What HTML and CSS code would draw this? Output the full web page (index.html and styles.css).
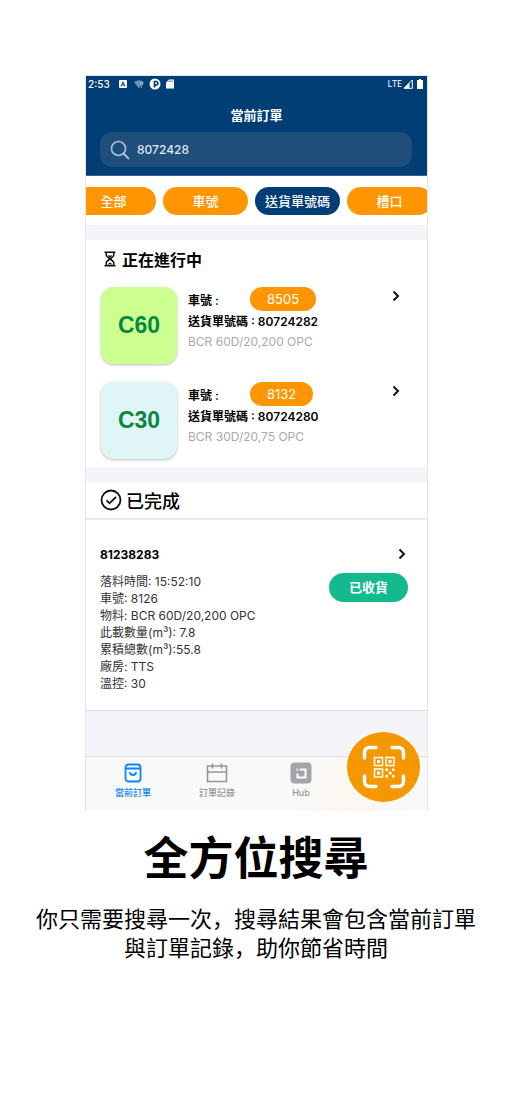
FILE: index.html
```html
<!DOCTYPE html>
<html lang="zh-Hant">
<head>
<meta charset="utf-8">
<meta name="viewport" content="width=device-width, initial-scale=1">
<title>當前訂單</title>
<link rel="stylesheet" href="styles.css">
</head>
<body>
<main class="promo">
  <div class="phone">
    <header class="header">
      <div class="status">
        <span class="clock">2:53</span>
        <svg class="status-icon" viewBox="0 0 10 10" aria-hidden="true"><rect x="1" y="1" width="8" height="8" rx="1" fill="#fff"/><path d="M3 7.5 5 2.8 7 7.5M3.8 6h2.4" fill="none" stroke="#003e75"/></svg>
        <svg class="status-icon wifi" viewBox="0 0 12 10" aria-hidden="true"><path d="M0 2.5Q6-1.500 12 2.500L6 10Z" fill="#6f93b5"/><path d="M7.500 5q.2-1.300 1.500-1.300 1.500 0 1.500 1.200T9 7v.8M9 8.800v1" fill="none" stroke="#c4d3e0"/></svg>
        <svg class="status-icon parking" viewBox="0 0 12 12" aria-hidden="true"><circle cx="6" cy="6" r="5.500" fill="#fff"/><path d="M5.500 9.500V3.500h1.600a1.700 1.700 0 0 1 0 3.600H5.500" fill="none" stroke="#003e75" stroke-width="1.600"/></svg>
        <svg class="status-icon" viewBox="0 0 10 10" aria-hidden="true"><path d="M4 .5h5v9H1v-6Z" fill="#fff"/><path d="M4.200 1.500v1.600M5.800 1.500v1.600M7.400 1.500v1.600" stroke="#003e75" stroke-width=".7"/></svg>
        <span class="network">LTE</span>
        <svg class="status-icon signal" viewBox="0 0 10 10" aria-hidden="true"><path d="M9.300 1v8.300H1Z" fill="none" stroke="#fff"/><path d="M6.500 3.800v5.500H1Z" fill="#fff"/></svg>
        <svg class="battery" viewBox="0 0 6 10" aria-hidden="true"><path d="M2 0h2v1h2v9H0V1h2Z" fill="#fff"/></svg>
      </div>
      <h1 class="title">當前訂單</h1>
      <label class="search">
        <svg class="search-icon" viewBox="0 0 20 20" aria-label="搜尋" role="img"><circle cx="8.500" cy="8.500" r="7" fill="none" stroke="currentColor" stroke-width="1.700"/><path d="m13.500 13.500 5.500 5.500" stroke="currentColor" stroke-width="2"/></svg>
        <input class="search-input" type="text" value="8072428">
      </label>
    </header>

    <nav class="chips">
      <button class="chip" type="button">全部</button>
      <button class="chip" type="button">車號</button>
      <button class="chip chip-active" type="button">送貨單號碼</button>
      <button class="chip" type="button">槽口</button>
    </nav>

    <section class="panel ongoing">
      <h2 class="ongoing-title">
        <svg class="hourglass" viewBox="0 0 12 16" aria-hidden="true"><path d="M.5 1.200h11M.5 14.800h11M2.200 1.500V4q0 1.500 3.800 4 3.800-2.500 3.800-4V1.500M2.200 14.500V12Q2.200 10.500 6 8q3.800 2.500 3.800 4v2.500" fill="none" stroke="#111" stroke-width="1.500"/><path d="M3.500 4.500h5L6 7ZM3.200 13.500 6 11.500l2.800 2Z" fill="#111"/></svg>
        正在進行中
      </h2>
      <article class="order">
        <div class="grade grade-lime">C60</div>
        <div class="order-info">
          <div class="plate"><span>車號 :</span><span class="badge">8505</span></div>
          <div class="number">送貨單號碼 : 80724282</div>
          <div class="material">BCR 60D/20,200 OPC</div>
        </div>
        <svg class="chevron" viewBox="0 0 8 12" aria-hidden="true"><path d="m1.500 1.500 4.500 4.500-4.500 4.500" fill="none" stroke="currentColor" stroke-width="2"/></svg>
      </article>
      <article class="order">
        <div class="grade grade-mint">C30</div>
        <div class="order-info">
          <div class="plate"><span>車號 :</span><span class="badge">8132</span></div>
          <div class="number">送貨單號碼 : 80724280</div>
          <div class="material">BCR 30D/20,75 OPC</div>
        </div>
        <svg class="chevron" viewBox="0 0 8 12" aria-hidden="true"><path d="m1.500 1.500 4.500 4.500-4.500 4.500" fill="none" stroke="currentColor" stroke-width="2"/></svg>
      </article>
    </section>

    <section class="panel">
      <h2 class="done-title">
        <svg class="check" viewBox="0 0 22 22" aria-hidden="true"><circle cx="11" cy="11" r="9.500" fill="none" stroke="#111" stroke-width="1.800"/><path d="m6.500 11.300 3 3L16 8" fill="none" stroke="#111" stroke-width="1.800"/></svg>
        已完成
      </h2>
      <article class="done">
        <div class="done-head">
          <h3 class="done-number">81238283</h3>
          <svg class="chevron" viewBox="0 0 8 12" aria-hidden="true"><path d="m1.500 1.500 4.500 4.500-4.500 4.500" fill="none" stroke="currentColor" stroke-width="2"/></svg>
        </div>
        <div class="done-body">
          <ul class="details">
            <li>落料時間: 15:52:10</li>
            <li>車號: 8126</li>
            <li>物料: BCR 60D/20,200 OPC</li>
            <li>此載數量(m³): 7.8</li>
            <li>累積總數(m³):55.8</li>
            <li>廠房: TTS</li>
            <li>溫控: 30</li>
          </ul>
          <span class="received">已收貨</span>
        </div>
      </article>
    </section>

    <nav class="tabs">
      <a class="tab tab-active" href="#">
        <svg class="tab-icon" viewBox="0 0 22 22" fill="none" stroke="currentColor" stroke-width="1.800" aria-hidden="true"><rect x="3.500" y="2.500" width="15" height="17" rx="3"/><path d="M4 6.500h14M8 10q0 3 3 3t3-3"/></svg>
        當前訂單
      </a>
      <a class="tab" href="#">
        <svg class="tab-icon" viewBox="0 0 22 22" fill="none" stroke="currentColor" stroke-width="1.600" aria-hidden="true"><path d="M1.500 4h19v15.500h-19ZM1.500 10h19M6.500 1.500v5M15.500 1.500v5"/></svg>
        訂單記錄
      </a>
      <a class="tab" href="#">
        <svg class="tab-icon" viewBox="0 0 22 22" aria-hidden="true"><rect x=".5" y=".5" width="21" height="21" rx="4" fill="#a4a4a8"/><path d="M10 7.500h5.500v8H7.500v-4" fill="none" stroke="#fff" stroke-width="2"/><rect x="6" y="6.500" width="2.500" height="2.500" fill="#d6d6d8"/></svg>
        Hub
      </a>
      <span class="tab-space"></span>
      <button class="scan" type="button" aria-label="QR">
        <svg class="scan-icon" viewBox="0 0 44 44" fill="none" stroke="#fff" aria-hidden="true">
          <path d="M2.500 13V8q0-5.500 5.500-5.500h6M30 2.500h6q5.500 0 5.500 5.500v5M41.500 31v5q0 5.500-5.500 5.500h-6M14 41.500H8Q2.500 41.500 2.500 36v-5" stroke-width="3.500" stroke-linecap="round"/>
          <path d="M12.500 12.500h8v8h-8ZM24 12.500h8v8h-8ZM12.500 24h8v8h-8Z" stroke-width="1.500"/>
          <path d="M15 15h3v3h-3ZM26.500 15h3v3h-3ZM15 26.500h3v3h-3ZM23.500 23.500h2.500v2.500h-2.500ZM30 23.500h2.500v2.500H30ZM26.700 26.700h2.800v2.800h-2.800ZM23.500 30h2.500v2.500h-2.500ZM30 30h2.500v2.500H30Z" fill="#fff" stroke="none"/>
        </svg>
      </button>
    </nav>
  </div>

  <h2 class="headline" lang="zh-Hans">全方位搜尋</h2>
  <p class="copy" lang="zh-Hans">你只需要搜尋一次，搜尋結果會包含當前訂單<br>與訂單記錄，助你節省時間</p>
</main>
</body>
</html>
```
FILE: styles.css
```css
* { box-sizing: border-box; }

body {
  margin: 0;
  background: #fff;
  color: #000;
  font-family: Inter, "Noto Sans CJK TC", sans-serif;
}

h1, h2, h3, p, ul { margin: 0; padding: 0; }
ul { list-style: none; }
svg { display: block; flex: none; }
button { border: 0; font: inherit; cursor: pointer; }

.promo { padding: 75px 0; }

.phone {
  display: flex;
  flex-direction: column;
  margin: 0 84px 0 85px;
  border: 1px solid #e4e4ec;
  border-bottom: 0;
  background: #f5f5f9;
}

.header {
  height: 100px;
  padding: 0 14px;
  background: #003e75;
  border-bottom: 1px solid #3c6391;
  color: #fff;
}

.status {
  display: flex;
  align-items: center;
  height: 15px;
  margin: 0 -12px;
  padding-right: 2px;
}
.clock { margin-right: 8px; font-size: 10px; font-weight: 500; }
.status-icon { width: 10px; height: 10px; margin-right: 6px; }
.wifi { margin-right: 5px; }
.parking { width: 12px; height: 12px; margin-right: 4px; }
.network { margin-left: auto; margin-right: 1px; font: 9px "Noto Sans", sans-serif; }
.signal { margin-right: 4px; }
.battery { width: 6px; height: 10px; }

.title {
  padding-top: 15px;
  font-size: 13px;
  line-height: 18px;
  font-weight: 700;
  text-align: center;
}

.search {
  display: flex;
  align-items: center;
  gap: 7px;
  height: 35px;
  margin: 8px 1px 0 0;
  padding: 0 10px;
  border-radius: 12px;
  background: #1f4e7b;
}
.search-icon { width: 20px; height: 20px; color: #a9bfd3; }
.search-input {
  flex: 1;
  min-width: 0;
  padding: 0;
  border: 0;
  outline: 0;
  background: none;
  color: #dfe7ef;
  font: 500 12px Inter, sans-serif;
}

.chips {
  display: flex;
  gap: 7px;
  padding: 11px 0 10px;
  overflow: hidden;
  background: #fff;
}
.chip {
  flex: none;
  width: 85px;
  height: 28px;
  padding: 0;
  border-radius: 14px;
  background: #ff9500;
  color: #fff;
  font-size: 13px;
  line-height: 26px;
  font-weight: 500;
}
.chip:first-child { margin-left: -15px; }
.chip-active { background: #003e75; }

.panel { margin-top: 15px; background: #fff; }

.ongoing { padding: 0 14px 8px; }
.ongoing-title {
  display: flex;
  align-items: center;
  gap: 6px;
  height: 37px;
  padding-left: 4px;
  font-size: 16px;
  font-weight: 700;
}
.hourglass { width: 12px; height: 16px; }

.order { display: flex; margin: 10px 0 18px; }
.order + .order { margin-bottom: 0; }
.grade {
  display: grid;
  place-items: center;
  width: 76px;
  height: 77px;
  margin: 0 11px 0 1px;
  border-radius: 13px;
  box-shadow: 0 1px 3px #0004;
  color: #078842;
  font-family: "Liberation Sans", Arial, sans-serif;
  font-size: 23px;
  font-weight: 700;
}
.grade-lime { background: #ccff90; }
.grade-mint { background: #e0f5f5; }
.order-info { flex: 1; font-size: 12px; font-weight: 600; white-space: nowrap; }
.plate { display: flex; align-items: center; height: 24px; }
.plate span:first-child { width: 62px; }
.badge {
  padding: 0 17px;
  border-radius: 12px;
  background: #ff9500;
  color: #fff;
  font-size: 13px;
  line-height: 24px;
  font-weight: 400;
}
.number { line-height: 22px; }
.material { color: #a9a9b4; font-weight: 400; line-height: 17px; }
.chevron { width: 8px; height: 12px; margin: 3px 13px 0 0; color: #111; }

.done-title {
  display: flex;
  align-items: center;
  gap: 4px;
  height: 38px;
  padding-left: 14px;
  border-bottom: 2px solid #e6e6ec;
  font-size: 18px;
  font-weight: 500;
}
.check { width: 22px; height: 22px; }

.done { padding: 24px 19px 18px 14px; border-bottom: 1px solid #dcdce2; }
.done-head { display: flex; align-items: center; justify-content: space-between; height: 20px; }
.done-head .chevron { margin: 0 2px 0 0; }
.done-number { font-size: 12px; font-weight: 700; }
.done-body { display: flex; justify-content: space-between; align-items: flex-start; padding-top: 9px; }
.details { color: #333; font-size: 12px; line-height: 17px; white-space: nowrap; }
.received {
  width: 79px;
  border-radius: 15px;
  background: #14ba8e;
  color: #fff;
  font-size: 13px;
  line-height: 29px;
  font-weight: 700;
  text-align: center;
}

.tabs {
  display: flex;
  position: relative;
  height: 55px;
  margin-top: 45px;
  padding-left: 5px;
  border-top: 1px solid #dedee2;
  background: radial-gradient(circle at 78% 60%, #fcf7f0, #f9f9f9 24%);
}
.tab, .tab-space { flex: 1; }
.tab {
  display: flex;
  flex-direction: column;
  align-items: center;
  gap: 2px;
  padding-top: 5px;
  color: #96969a;
  font-size: 9px;
  line-height: 14px;
  font-weight: 500;
  text-decoration: none;
}
.tab-active { color: #0a84ff; }
.tab-icon { width: 22px; height: 22px; }

.scan {
  display: grid;
  place-items: center;
  position: absolute;
  right: 7px;
  bottom: 9px;
  width: 73px;
  height: 70px;
  padding: 0;
  border-radius: 50%;
  background: #f59800;
}
.scan-icon { width: 44px; height: 44px; }

.headline {
  margin-top: 13px;
  font-family: "Noto Sans CJK SC", sans-serif;
  font-size: 45px;
  line-height: 64px;
  font-weight: 700;
  text-align: center;
}
.copy {
  margin-top: 15px;
  font-family: "Noto Sans CJK SC", sans-serif;
  font-size: 22px;
  line-height: 29px;
  text-align: center;
}
```
